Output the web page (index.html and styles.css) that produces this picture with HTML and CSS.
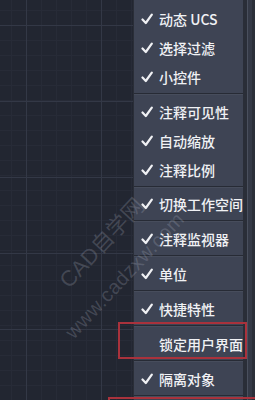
FILE: index.html
```html
<!DOCTYPE html>
<html lang="zh">
<head>
<meta charset="utf-8">
<link rel="stylesheet" href="styles.css">
</head>
<body>
<div class="screen">
  <div class="canvas"></div>
  <ul class="menu">
    <li class="item"><svg class="chk" viewBox="0 0 12 11"><path d="M1.5 6 L4.8 9.5 L10.8 1.2"/></svg><span>动态 UCS</span></li>
    <li class="item"><svg class="chk" viewBox="0 0 12 11"><path d="M1.5 6 L4.8 9.5 L10.8 1.2"/></svg><span>选择过滤</span></li>
    <li class="item"><svg class="chk" viewBox="0 0 12 11"><path d="M1.5 6 L4.8 9.5 L10.8 1.2"/></svg><span>小控件</span></li>
    <li class="sep"></li>
    <li class="item"><svg class="chk" viewBox="0 0 12 11"><path d="M1.5 6 L4.8 9.5 L10.8 1.2"/></svg><span>注释可见性</span></li>
    <li class="item"><svg class="chk" viewBox="0 0 12 11"><path d="M1.5 6 L4.8 9.5 L10.8 1.2"/></svg><span>自动缩放</span></li>
    <li class="item"><svg class="chk" viewBox="0 0 12 11"><path d="M1.5 6 L4.8 9.5 L10.8 1.2"/></svg><span>注释比例</span></li>
    <li class="sep sep-short"></li>
    <li class="item"><svg class="chk" viewBox="0 0 12 11"><path d="M1.5 6 L4.8 9.5 L10.8 1.2"/></svg><span>切换工作空间</span></li>
    <li class="sep"></li>
    <li class="item"><svg class="chk" viewBox="0 0 12 11"><path d="M1.5 6 L4.8 9.5 L10.8 1.2"/></svg><span>注释监视器</span></li>
    <li class="sep"></li>
    <li class="item"><svg class="chk" viewBox="0 0 12 11"><path d="M1.5 6 L4.8 9.5 L10.8 1.2"/></svg><span>单位</span></li>
    <li class="sep"></li>
    <li class="item"><svg class="chk" viewBox="0 0 12 11"><path d="M1.5 6 L4.8 9.5 L10.8 1.2"/></svg><span>快捷特性</span></li>
    <li class="sep"></li>
    <li class="item"><span class="nochk"></span><span>锁定用户界面</span></li>
    <li class="sep"></li>
    <li class="item"><svg class="chk" viewBox="0 0 12 11"><path d="M1.5 6 L4.8 9.5 L10.8 1.2"/></svg><span>隔离对象</span></li>
    <li class="sep"></li>
  </ul>
  <div class="strip"></div>
  <div class="mark mark-cad">CAD自学网</div>
  <div class="mark mark-www">www.cadzxw.com</div>
  <div class="hl hl-lock"></div>
  <div class="hl hl-next"></div>
</div>
</body>
</html>
```
FILE: styles.css
```css
html, body {
  margin: 0;
  padding: 0;
  background: #232733;
  overflow: hidden;
}
.screen {
  position: relative;
  display: flex;
  width: 255px;
  height: 400px;
  overflow: hidden;
  font-family: "Noto Sans CJK SC", "Noto Sans", sans-serif;
}
.canvas {
  flex: 0 0 133px;
  background-color: #222631;
  background-image:
    linear-gradient(to right, transparent 26px, #333846 26px, #333846 27px, transparent 27px),
    linear-gradient(to bottom, transparent 25px, #333846 25px, #333846 26px, transparent 26px),
    linear-gradient(to right, transparent 14px, #272b37 14px, #272b37 15px, transparent 15px),
    linear-gradient(to bottom, transparent 14px, #272b37 14px, #272b37 15px, transparent 15px);
  background-size: 75px 100%, 100% 76px, 15px 100%, 100% 15px;
  background-position: 0 0, 0 0, 12px 0, 0 11px;
}
.menu {
  flex: 0 0 110px;
  list-style: none;
  margin: 0;
  padding: 4px 0 0;
  background: #3e4454;
  border-left: 1px solid #2a2e38;
  box-sizing: border-box;
}
.item {
  display: flex;
  align-items: center;
  height: 29px;
  padding-left: 7px;
  color: #f0f1f4;
  font-size: 14px;
  font-weight: 500;
  white-space: nowrap;
}
.chk {
  flex: 0 0 12px;
  width: 12px;
  height: 12px;
  margin-right: 6px;
  fill: none;
  stroke: #f0f1f4;
  stroke-width: 2.2;
  stroke-linecap: round;
  stroke-linejoin: round;
}
.nochk {
  flex: 0 0 12px;
  margin-right: 6px;
}
.sep {
  height: 6px;
  display: flex;
  flex-direction: column;
  justify-content: center;
}
.sep::before {
  content: "";
  display: block;
  height: 1px;
  background: #272b35;
}
.sep::after {
  content: "";
  display: block;
  height: 1px;
  background: #474d5c;
}
.sep-short {
  height: 5px;
}
.strip {
  flex: 0 0 12px;
  background: linear-gradient(to right, #2a2e38 0, #2a2e38 4px, #4a505e 4px, #4a505e 5px, #343946 5px, #343946 9px, #2b2f39 9px);
}
.mark {
  position: absolute;
  color: rgba(185, 190, 205, 0.22);
  white-space: nowrap;
  line-height: 1;
  transform-origin: left bottom;
  transform: rotate(-47deg);
  font-family: "Liberation Sans", "Noto Sans CJK SC", sans-serif;
  pointer-events: none;
}
.mark-cad {
  left: 72px;
  top: 270px;
  font-size: 22px;
}
.mark-www {
  left: 76px;
  top: 322px;
  font-size: 20px;
  letter-spacing: 0.5px;
}
.hl {
  position: absolute;
  border: 2px solid #a9323c;
  box-sizing: border-box;
}
.hl-lock {
  left: 118px;
  top: 322px;
  width: 129px;
  height: 37px;
}
.hl-next {
  left: 108px;
  top: 397px;
  width: 160px;
  height: 20px;
}
```
